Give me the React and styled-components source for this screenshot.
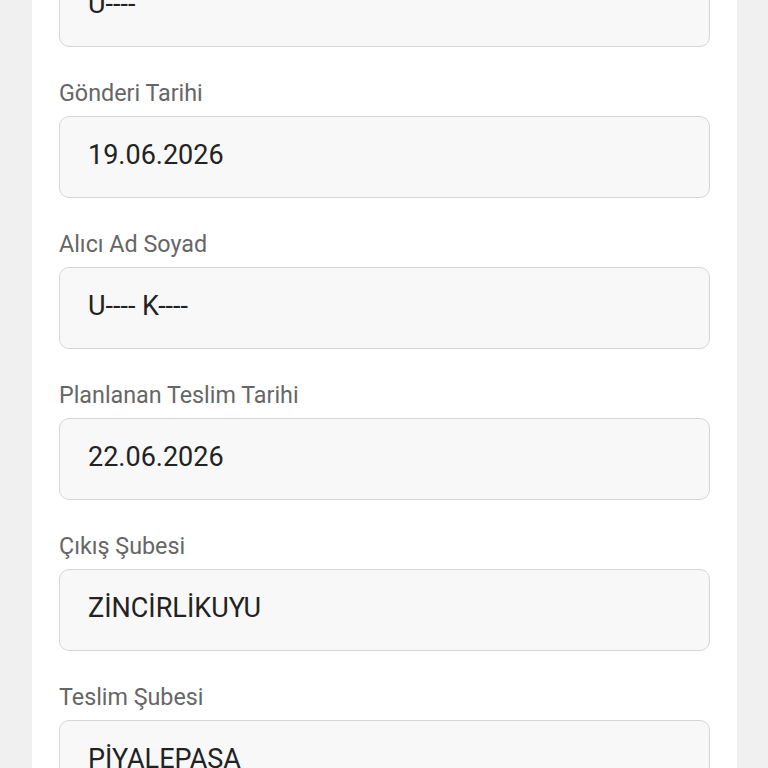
import styled, { createGlobalStyle } from 'styled-components';

const fields = [
  { label: 'Alıcı Kodu', value: 'U----' },
  { label: 'Gönderi Tarihi', value: '19.06.2026' },
  { label: 'Alıcı Ad Soyad', value: 'U---- K----' },
  { label: 'Planlanan Teslim Tarihi', value: '22.06.2026' },
  { label: 'Çıkış Şubesi', value: 'ZİNCİRLİKUYU' },
  { label: 'Teslim Şubesi', value: 'PİYALEPAŞA' },
];

const App = () => {
  return (
    <>
      <GlobalStyle />
      <Page>
        <Card>
          {fields.map((field) => (
            <Field key={field.label}>
              <Label>{field.label}</Label>
              <ValueBox>{field.value}</ValueBox>
            </Field>
          ))}
        </Card>
      </Page>
    </>
  );
};

const GlobalStyle = createGlobalStyle`
  html, body {
    margin: 0;
    padding: 0;
    background: #f0f0f0;
    font-family: Roboto, "Noto Sans", "Liberation Sans", sans-serif;
    overflow: hidden;
  }
`;

const Page = styled.div`
  padding: 0 31px 0 32px;
  margin-top: -72px;
`;

const Card = styled.div`
  background: #ffffff;
  padding: 0 27px 40px;
  display: flex;
  flex-direction: column;
  gap: 32px;
`;

const Field = styled.div`
  display: flex;
  flex-direction: column;
  gap: 9px;
`;

const Label = styled.div`
  font-size: 23.3px;
  line-height: 28px;
  color: #666666;
`;

const ValueBox = styled.div`
  box-sizing: border-box;
  height: 82px;
  display: flex;
  align-items: center;
  padding: 0 28px 5px;
  background: #f8f8f8;
  border: 1.5px solid #d6d6d6;
  border-radius: 10px;
  font-size: 27px;
  color: #222222;
`;

export default App;
